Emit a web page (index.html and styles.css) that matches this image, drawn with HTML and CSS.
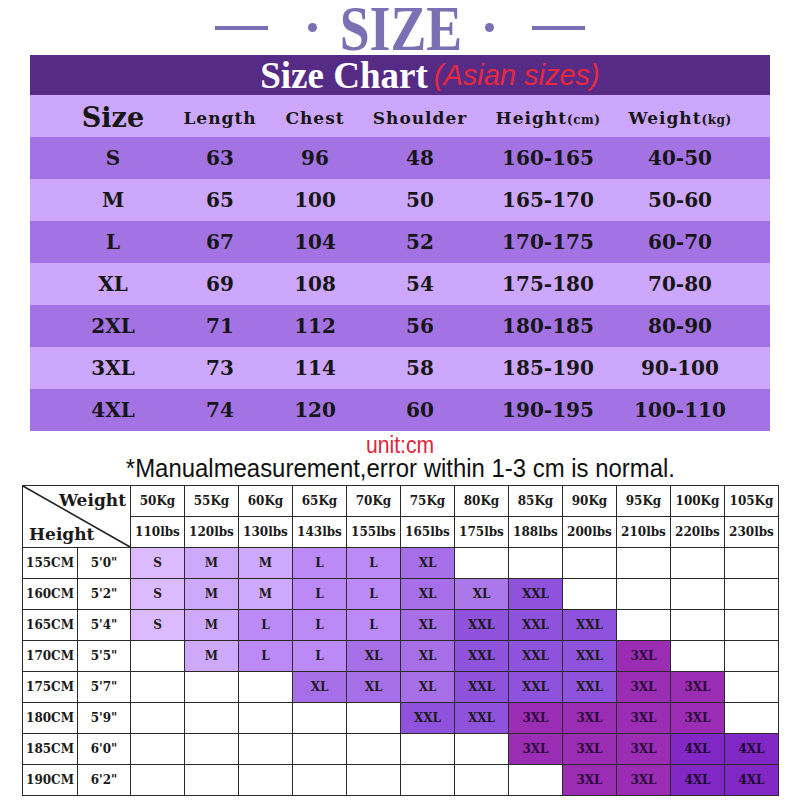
FILE: index.html
```html
<!DOCTYPE html>
<html>
<head>
<meta charset="utf-8">
<link rel="stylesheet" href="styles.css">
</head>
<body>
<div class="page">
  <div class="title">
    <span class="dash"></span><span class="dot dot-l"></span><span class="size-word">SIZE</span><span class="dot dot-r"></span><span class="dash"></span>
  </div>
  <div class="chart">
    <div class="chart-head"><span class="chart-title">Size Chart</span><span class="asian">(Asian sizes)</span></div>
    <div class="row hdr">
      <div class="big">Size</div><div>Length</div><div>Chest</div><div>Shoulder</div><div>Height<small>(cm)</small></div><div>Weight<small>(kg)</small></div>
    </div>
    <div class="row dark"><div>S</div><div>63</div><div>96</div><div>48</div><div>160-165</div><div>40-50</div></div>
    <div class="row light"><div>M</div><div>65</div><div>100</div><div>50</div><div>165-170</div><div>50-60</div></div>
    <div class="row dark"><div>L</div><div>67</div><div>104</div><div>52</div><div>170-175</div><div>60-70</div></div>
    <div class="row light"><div>XL</div><div>69</div><div>108</div><div>54</div><div>175-180</div><div>70-80</div></div>
    <div class="row dark"><div>2XL</div><div>71</div><div>112</div><div>56</div><div>180-185</div><div>80-90</div></div>
    <div class="row light"><div>3XL</div><div>73</div><div>114</div><div>58</div><div>185-190</div><div>90-100</div></div>
    <div class="row dark"><div>4XL</div><div>74</div><div>120</div><div>60</div><div>190-195</div><div>100-110</div></div>
  </div>
  <div class="unit"><span class="narrow">unit:cm</span></div>
  <div class="note"><span class="narrow">*Manualmeasurement,error within 1-3 cm is normal.</span></div>
  <table class="grid">
    <colgroup><col class="cw1"><col class="cw2"><col class="cw"><col class="cw"><col class="cw"><col class="cw"><col class="cw"><col class="cw"><col class="cw"><col class="cw"><col class="cw"><col class="cw"><col class="cw"><col class="cw"></colgroup>
    <tr>
      <td class="corner" colspan="2" rowspan="2">
        <div class="corner-box">
          <svg class="diag" viewBox="0 0 100 100" preserveAspectRatio="none"><line x1="0" y1="0" x2="100" y2="100" stroke="#222" stroke-width="1.6" vector-effect="non-scaling-stroke"/></svg>
          <span class="cw-weight">Weight</span>
          <span class="cw-height">Height</span>
        </div>
      </td>
      <td>50Kg</td><td>55Kg</td><td>60Kg</td><td>65Kg</td><td>70Kg</td><td>75Kg</td><td>80Kg</td><td>85Kg</td><td>90Kg</td><td>95Kg</td><td>100Kg</td><td>105Kg</td>
    </tr>
    <tr>
      <td>110lbs</td><td>120lbs</td><td>130lbs</td><td>143lbs</td><td>155lbs</td><td>165lbs</td><td>175lbs</td><td>188lbs</td><td>200lbs</td><td>210lbs</td><td>220lbs</td><td>230lbs</td>
    </tr>
    <tr><td>155CM</td><td>5'0"</td><td class="s">S</td><td class="m">M</td><td class="m">M</td><td class="l">L</td><td class="l">L</td><td class="xl">XL</td><td></td><td></td><td></td><td></td><td></td><td></td></tr>
    <tr><td>160CM</td><td>5'2"</td><td class="s">S</td><td class="m">M</td><td class="m">M</td><td class="l">L</td><td class="l">L</td><td class="xl">XL</td><td class="xl xl-lt">XL</td><td class="xxl">XXL</td><td></td><td></td><td></td><td></td></tr>
    <tr><td>165CM</td><td>5'4"</td><td class="s">S</td><td class="m">M</td><td class="l">L</td><td class="l">L</td><td class="l">L</td><td class="xl">XL</td><td class="xxl">XXL</td><td class="xxl">XXL</td><td class="xxl">XXL</td><td></td><td></td><td></td></tr>
    <tr><td>170CM</td><td>5'5"</td><td></td><td class="m">M</td><td class="l">L</td><td class="l">L</td><td class="xl">XL</td><td class="xl">XL</td><td class="xxl">XXL</td><td class="xxl">XXL</td><td class="xxl">XXL</td><td class="x3">3XL</td><td></td><td></td></tr>
    <tr><td>175CM</td><td>5'7"</td><td></td><td></td><td></td><td class="xl">XL</td><td class="xl">XL</td><td class="xl">XL</td><td class="xxl">XXL</td><td class="xxl">XXL</td><td class="xxl">XXL</td><td class="x3">3XL</td><td class="x3">3XL</td><td></td></tr>
    <tr><td>180CM</td><td>5'9"</td><td></td><td></td><td></td><td></td><td></td><td class="xxl">XXL</td><td class="xxl">XXL</td><td class="x3">3XL</td><td class="x3">3XL</td><td class="x3">3XL</td><td class="x3">3XL</td><td></td></tr>
    <tr><td>185CM</td><td>6'0"</td><td></td><td></td><td></td><td></td><td></td><td></td><td></td><td class="x3">3XL</td><td class="x3">3XL</td><td class="x3">3XL</td><td class="x4">4XL</td><td class="x4">4XL</td></tr>
    <tr><td>190CM</td><td>6'2"</td><td></td><td></td><td></td><td></td><td></td><td></td><td></td><td></td><td class="x3">3XL</td><td class="x3">3XL</td><td class="x4">4XL</td><td class="x4">4XL</td></tr>
  </table>
</div>
</body>
</html>
```
FILE: styles.css
```css
body {
  margin: 0;
  background: #ffffff;
}
.page {
  width: 800px;
  height: 800px;
  overflow: hidden;
}
.title {
  height: 55px;
  display: flex;
  align-items: center;
  justify-content: center;
}
.dash {
  width: 53px;
  height: 4px;
  background: #7b70b3;
}
.dot {
  width: 9px;
  height: 9px;
  border-radius: 50%;
  background: #7b70b3;
}
.dot-l { margin-left: 40px; }
.dot-r { margin-right: 38px; }
.size-word {
  display: inline-block;
  font-family: "Liberation Serif", serif;
  font-weight: bold;
  font-size: 64px;
  line-height: 55px;
  color: #7b70b3;
  transform: scaleX(0.84);
  margin: 2px 11px 0;
}
.chart {
  margin: 0 30px;
  width: 740px;
}
.chart-head {
  height: 40px;
  background: #552b86;
  display: flex;
  align-items: center;
  justify-content: center;
  padding-left: 60px;
  box-sizing: border-box;
  line-height: 1;
}
.chart-title {
  font-family: "Liberation Serif", serif;
  font-weight: bold;
  font-size: 37px;
  color: #ffffff;
}
.asian {
  font-family: "Liberation Sans", sans-serif;
  font-style: italic;
  font-size: 29px;
  color: #e8283c;
  margin-left: 6px;
}
.row {
  display: grid;
  grid-template-columns: 106px 108px 82px 128px 128px 136px;
  padding-left: 30px;
  height: 42px;
  align-items: center;
  text-align: center;
  font-family: "DejaVu Serif", serif;
  font-weight: bold;
  font-size: 20px;
  color: #161616;
  white-space: nowrap;
}
.hdr {
  background: #cda7fb;
  font-size: 17px;
  letter-spacing: 1px;
  padding-top: 3px;
  box-sizing: border-box;
}
.hdr small {
  font-size: 12px;
  letter-spacing: 0.5px;
}
.hdr .big {
  font-size: 27px;
  letter-spacing: 0;
}
.dark { background: #a372e3; }
.light { background: #cda7fb; }
.unit {
  text-align: center;
  height: 23px;
  line-height: 23px;
  margin-top: 1px;
}
.unit .narrow {
  font-size: 23px;
  color: #e0263a;
}
.note {
  text-align: center;
  height: 24px;
  line-height: 24px;
}
.note .narrow {
  font-size: 26px;
  color: #111;
  transform: scaleX(0.92);
}
.narrow {
  display: inline-block;
  font-family: "Liberation Sans", sans-serif;
  transform: scaleX(0.92);
  white-space: nowrap;
  line-height: 1;
  vertical-align: middle;
}
.grid {
  margin: 6px 0 0 22px;
  border-collapse: collapse;
  table-layout: fixed;
  width: 756px;
  font-family: "DejaVu Serif", serif;
  font-weight: bold;
  font-size: 12px;
  color: #1a1a1a;
}
.cw1 { width: 55px; }
.cw2 { width: 53px; }
.cw { width: 54px; }
.grid td {
  border: 1px solid #2a2a2a;
  height: 30px;
  padding: 0;
  text-align: center;
  white-space: nowrap;
}
.grid td.corner {
  padding: 0;
}
.corner-box {
  position: relative;
  height: 61px;
  display: flex;
  flex-direction: column;
  justify-content: space-between;
  font-size: 17px;
}
.diag {
  position: absolute;
  left: 0;
  top: 0;
  width: 100%;
  height: 100%;
}
.cw-weight {
  align-self: flex-end;
  margin: 4px 4px 0 0;
}
.cw-height {
  align-self: flex-start;
  margin: 0 0 3px 6px;
}
.s { background: #dbbafd; }
.m { background: #cea8fa; }
.l { background: #bc8af6; }
.xl { background: #a66fe8; }
.xl-lt { background: #ab78ea; }
.xxl { background: #8e52dc; }
.x3 { background: #9b2cb4; color: #2a0838; }
.x4 { background: #8127c6; color: #1e0830; }
```
